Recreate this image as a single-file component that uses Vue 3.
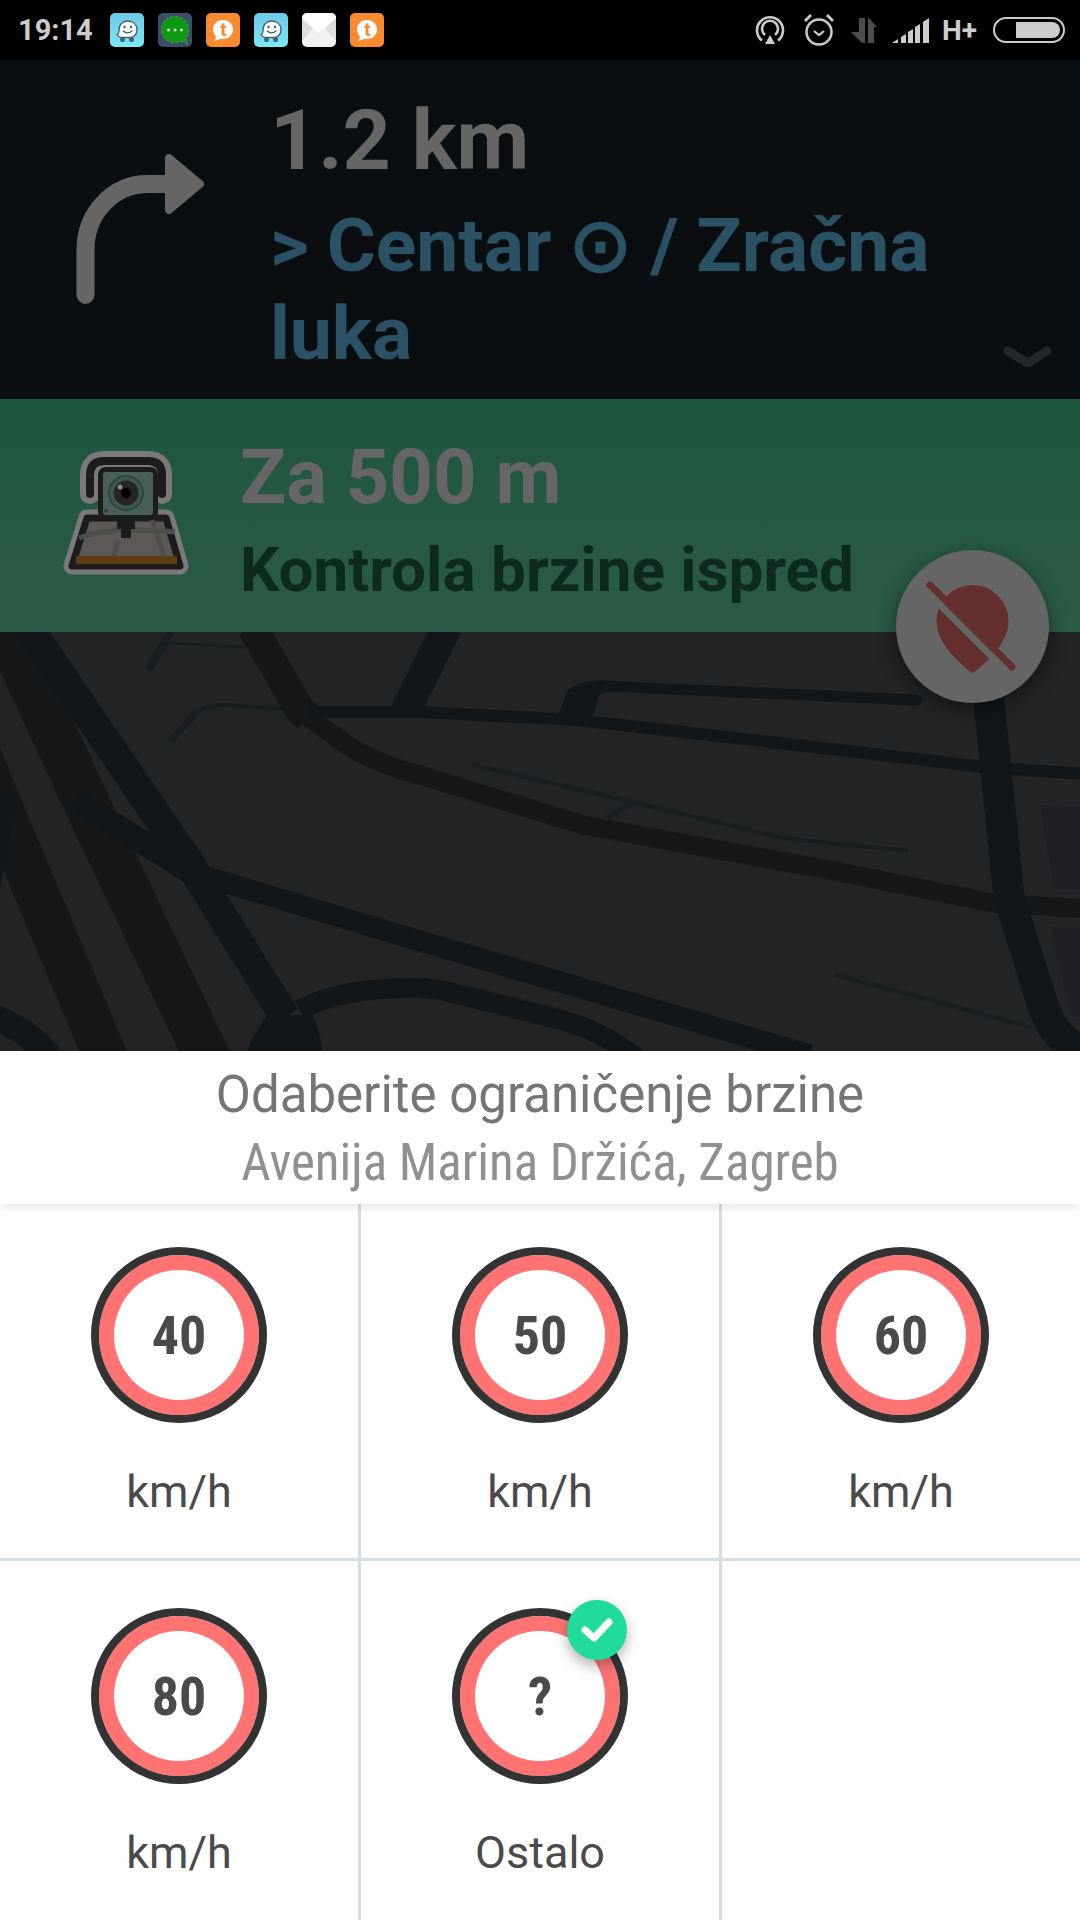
<script setup>
const notifications = ['waze', 'chat', 'talk', 'waze', 'mail', 'talk']

const limits = [
  { value: '40', label: 'km/h' },
  { value: '50', label: 'km/h' },
  { value: '60', label: 'km/h' },
  { value: '80', label: 'km/h' },
  { value: '?', label: 'Ostalo', selected: true },
  { empty: true }
]
</script>

<template>
  <div class="page">
    <div class="status-bar">
      <span class="time">19:14</span>
      <div class="notif-list">
        <svg v-for="(n, i) in notifications" :key="i" class="notif" viewBox="0 0 34 34">
          <template v-if="n === 'waze'">
            <defs>
              <linearGradient :id="'wz' + i" x1="0" y1="0" x2="0" y2="1">
                <stop offset="0" stop-color="#6cc9e6" />
                <stop offset="1" stop-color="#7ae9f6" />
              </linearGradient>
            </defs>
            <rect width="34" height="34" rx="5" :fill="'url(#wz' + i + ')'" />
            <path d="M9 17c0-6 4-9 9-9s9 3.500 9 8.500c0 4-2.500 7-6 8h-8c-2 0-5-1-6-3 1.500-.500 2-2 2-4.500z" fill="#fff" stroke="#45606e" stroke-width="1.300" />
            <circle cx="14.500" cy="14" r="1.200" fill="#45606e" />
            <circle cx="21" cy="14" r="1.200" fill="#45606e" />
            <path d="M13.500 18c2 2.500 6 2.500 8.500 0" fill="none" stroke="#45606e" stroke-width="1.300" stroke-linecap="round" />
            <circle cx="12.500" cy="26.500" r="2.500" fill="#45606e" />
            <circle cx="21.500" cy="26.500" r="2.500" fill="#45606e" />
          </template>
          <template v-else-if="n === 'chat'">
            <rect width="34" height="34" rx="5" fill="#3b4e66" />
            <path d="M17 3.500c7.500 0 13.500 5.800 13.500 13.300 0 3.200-1 6-2.800 8.200l1.800 5.500-6.200-2.400c-1.900.900-4 1.400-6.300 1.400C9.500 29.500 3.500 24.300 3.500 16.800S9.500 3.500 17 3.500z" fill="#0d9a12" stroke="#4cb05a" stroke-width=".800" stroke-dasharray="3 2" />
            <circle cx="10.500" cy="17" r="1.500" fill="#d8f0d8" />
            <circle cx="17" cy="17" r="1.500" fill="#d8f0d8" />
            <circle cx="23.500" cy="17" r="1.500" fill="#d8f0d8" />
          </template>
          <template v-else-if="n === 'talk'">
            <rect width="34" height="34" rx="5" fill="#f98a2f" />
            <path d="M17 7c5.500 0 10 4 10 9.500s-4.500 9.500-10 9.500c-.800 0-1.600-.100-2.300-.200L8.500 28l1.500-4.600C8 21.100 7 18.900 7 16.500 7 11 11.500 7 17 7z" fill="#fff" />
            <text x="17.500" y="23" text-anchor="middle" class="talk-t">t</text>
          </template>
          <template v-else>
            <rect width="34" height="34" rx="5" fill="#f1f1f1" />
            <path d="M0 5a5 5 0 0 1 5-5h24a5 5 0 0 1 5 5L17 20z" fill="#fff" />
            <path d="M0 5l11 10.500L0 28zM34 5L23 15.500 34 28z" fill="#dedede" />
          </template>
        </svg>
      </div>

      <div class="sys-icons">
        <svg class="sys" width="30" height="30" viewBox="0 0 30 30">
          <path d="M7 26.500a13 13 0 1 1 16 0M10 21a8 8 0 1 1 10 0" fill="none" stroke="#ccc" stroke-width="2.600" transform="translate(0 -1)" />
          <path d="M15 20l5 9H10z" fill="#ccc" />
        </svg>
        <svg class="sys" width="32" height="34" viewBox="0 0 32 34">
          <circle cx="16" cy="19" r="12.500" fill="none" stroke="#ccc" stroke-width="2.500" />
          <path d="M11 18l5 4 5-4" fill="none" stroke="#ccc" stroke-width="2.200" />
          <path d="M2 8l6-6M30 8l-6-6" stroke="#ccc" stroke-width="2.800" />
        </svg>
        <svg class="sys" width="27" height="26" viewBox="0 0 27 26">
          <path d="M15 1V26H12L1 15H9V1zM18 0V26H24V10H27z" fill="#4c4c4c" />
        </svg>
        <svg class="sys" width="37" height="25" viewBox="0 0 37 25">
          <path d="M0 25l6-4v4zM9 19l5-3v9H9zM16 14l5-3v14h-5zM23 9l5-3v19h-5zM31 4l6-4v25h-6z" fill="#ccc" />
        </svg>
        <span class="net">H+</span>
        <div class="battery"><div class="battery-level"></div></div>
      </div>
    </div>

    <div class="nav">
      <svg class="nav-arrow" width="270" height="339" viewBox="0 60 270 339">
        <path d="M85.500 295V250C85.500 213 113 184 148 184H172" fill="none" stroke="#666" stroke-width="18" stroke-linecap="round" />
        <path d="M169 158L200 184 169 210z" fill="#666" stroke="#666" stroke-width="8" stroke-linejoin="round" />
      </svg>
      <div class="nav-text">
        <div class="nav-dist">1.2 km</div>
        <div class="nav-street">&gt; Centar ⊙ / Zračna luka</div>
      </div>
      <svg class="nav-chevron" width="56" height="32" viewBox="0 0 56 32">
        <path d="M8 11L27.500 23 47 11" fill="none" stroke="#23272b" stroke-width="9" stroke-linecap="round" stroke-linejoin="round" />
      </svg>
    </div>

    <div class="alert">
      <svg class="alert-cam" width="200" height="180" viewBox="0 0 200 180">
        <g fill="none" stroke="#7a7a7a" stroke-linejoin="round" stroke-linecap="round">
          <path d="M60 74V55q0-14 14-14h44q14 0 14 14v19" stroke-width="20" />
          <path d="M57 98h79l14 48H42z" fill="#7a7a7a" stroke-width="17" />
        </g>
        <path d="M57 98h79l14 48H42z" fill="#5c5856" stroke="#1c1c1c" stroke-width="7" stroke-linejoin="round" />
        <path d="M49 118c20-8 45-10 96-6M88 120l-4 16M122 100l12 36" fill="none" stroke="#4d4d4b" stroke-width="5" />
        <rect x="46" y="136" width="101" height="8" fill="#5e3d14" />
        <path d="M60 74V55q0-14 14-14h44q14 0 14 14v19" fill="none" stroke="#1c1c1c" stroke-width="8" stroke-linecap="round" />
        <rect x="70.500" y="49.500" width="55" height="48" rx="5" fill="#4a5e5a" stroke="#1c1c1c" stroke-width="5" />
        <path d="M87 100h18v9h-4v9h-10v-9h-4z" fill="#1c1c1c" />
        <circle cx="96" cy="73" r="17" fill="#42574f" stroke="#264a3f" stroke-width="2" />
        <circle cx="96" cy="73" r="12.500" fill="#252525" />
        <circle cx="96" cy="73" r="5" fill="#000" />
        <circle cx="90" cy="67" r="2.500" fill="#8a8a8a" />
        <circle cx="76" cy="91" r="2" fill="#264a3f" />
      </svg>
      <div class="alert-text">
        <div class="alert-dist">Za 500 m</div>
        <div class="alert-title">Kontrola brzine ispred</div>
      </div>
    </div>

    <div class="map">
      <svg class="map-svg" width="1080" height="419" viewBox="0 0 1080 419">
        <g fill="none" stroke-linejoin="round">
          <!-- buildings -->
          <path d="M1040 173L1080 175V258L1054 256zM1050 295L1080 297V385L1072 385z" fill="#1e2023" />

          <!-- small streets -->
          <g stroke="#191e20">
            <path d="M172 -2L148 38" stroke-width="8" />
            <path d="M167 11L245 15" stroke-width="3" />
            <path d="M170 109L197 80" stroke-width="7" />
            <path d="M197 80Q210 72 227 73L282 77" stroke-width="4" />
            <path d="M473 133L633 170 770 203Q803 210 906 218" stroke-width="4" stroke-linecap="round" />
            <path d="M607 186L633 170" stroke-width="5" />
            <path d="M837 343L1030 395" stroke-width="4" stroke-linecap="round" />
          </g>

          <!-- wide bands under the rest -->
          <g stroke="#151719">
            <path d="M-40 78L25 233 108 431" stroke-width="44" />
            <path d="M5 -5L92 183 210 431" stroke-width="46" />
            <path d="M252 -5L300 78 308 85" stroke-width="30" />
            <path d="M304 82L350 115Q380 133 420 143L583 193 840 240 992 271 1090 277" stroke-width="19" />
          </g>

          <!-- main roads -->
          <g stroke="#11161a">
            <path d="M310 80H420L577 88 840 118 992 136 1090 142" stroke-width="12" />
            <path d="M405 80L447 -5" stroke-width="30" />
            <path d="M603 54L916 68" stroke-width="11" stroke-linecap="round" />
            <path d="M988 60L1009 265 1045 380Q1060 415 1095 425" stroke-width="31" />
            <path d="M28 -5L190 232 285 385" stroke-width="30" />
            <path d="M84 174L207 250" stroke-width="24" stroke-linecap="round" />
            <path d="M207 245L420 309 810 423" stroke-width="21" />
            <path d="M300 378Q340 355 420 356 440 357 453 361L562 388Q600 398 640 428" stroke-width="20" />
            <path d="M-10 384Q25 395 50 425" stroke-width="26" />
          </g>
          <path d="M559 81L567 60Q572 50 603 48L613 60Q600 60 598 65L593 84z" fill="#11161a" />
          <path d="M267 383Q255 400 247 419H322Q321 400 312 383z" fill="#11161a" />
          <path d="M0 160L17 162 0 256z" fill="#11161a" />
        </g>
      </svg>
      <button class="fab">
        <svg width="153" height="153" viewBox="0 0 153 153">
          <path d="M76.500 123.500C62 112 40.500 93 40.500 71A36 36 0 0 1 112.500 71C112.500 93 91 112 76.500 123.500z" fill="#662f2f" />
          <path d="M26 36L120 130" stroke="#666" stroke-width="8" />
          <path d="M34 35L116 117" stroke="#662f2f" stroke-width="7" stroke-linecap="round" />
        </svg>
      </button>
    </div>

    <div class="sheet-head">
      <div class="sheet-title">Odaberite ograničenje brzine</div>
      <div class="sheet-sub">Avenija Marina Držića, Zagreb</div>
    </div>

    <div class="limit-grid">
      <div v-for="(l, i) in limits" :key="i" class="limit-cell">
        <template v-if="!l.empty">
          <div class="sign">
            <span class="sign-value">{{ l.value }}</span>
            <div v-if="l.selected" class="badge">
              <svg width="60" height="60" viewBox="0 0 60 60">
                <path d="M18 30l9 8 15-16" fill="none" stroke="#fff" stroke-width="7" stroke-linecap="round" stroke-linejoin="round" />
              </svg>
            </div>
          </div>
          <div class="limit-label">{{ l.label }}</div>
        </template>
      </div>
    </div>
  </div>
</template>

<style scoped>
.page {
  width: 1080px;
  height: 1920px;
  overflow: hidden;
  display: flex;
  flex-direction: column;
  background: #fff;
  font-family: Roboto, sans-serif;
}

.status-bar {
  height: 60px;
  flex-shrink: 0;
  background: #000;
  display: flex;
  align-items: center;
  padding-left: 18px;
  box-sizing: border-box;
}

.time {
  width: 92px;
  font-size: 29px;
  font-weight: 700;
  color: #ccc;
}

.notif-list {
  display: flex;
  gap: 14px;
}

.notif {
  width: 34px;
  height: 34px;
  display: block;
}

.talk-t {
  font-family: Roboto, sans-serif;
  font-size: 19px;
  font-weight: 700;
  fill: #f98a2f;
}

.sys-icons {
  margin-left: auto;
  display: flex;
  align-items: center;
  padding-right: 15px;
}

.sys {
  display: block;
  flex-shrink: 0;
}

.sys:nth-child(1) { margin-right: 18px; }
.sys:nth-child(2) { margin-right: 15px; }
.sys:nth-child(3) { margin-right: 15px; }
.sys:nth-child(4) { margin-right: 13px; }

.net {
  font-size: 28px;
  font-weight: 700;
  color: #ccc;
  margin-right: 16px;
}

.battery {
  width: 72px;
  height: 26px;
  box-sizing: border-box;
  border: 2px solid #ccc;
  border-radius: 13px;
  padding: 3px 3px 3px 21px;
}

.battery-level {
  height: 100%;
  background: #ccc;
  border-radius: 0 8px 8px 0;
}

.nav {
  height: 339px;
  flex-shrink: 0;
  background: #0a0e11;
  display: flex;
  position: relative;
}

.nav-arrow {
  display: block;
  flex-shrink: 0;
}

.nav-text {
  width: 700px;
  padding-top: 20px;
}

.nav-dist {
  font-size: 84px;
  line-height: 121px;
  font-weight: 700;
  color: #666;
}

.nav-street {
  font-size: 75px;
  line-height: 88px;
  font-weight: 700;
  color: #2b5165;
  word-spacing: -0.6px;
}

.nav-chevron {
  position: absolute;
  left: 1000px;
  top: 280px;
}

.alert {
  height: 233px;
  flex-shrink: 0;
  display: flex;
  background: linear-gradient(#1e5640, #2c5b47);
}

.alert-cam {
  display: block;
  flex-shrink: 0;
  margin: 21px 0 0 30px;
}

.alert-text {
  margin-left: 10px;
  padding-top: 29px;
}

.alert-dist {
  font-size: 76px;
  line-height: 99px;
  font-weight: 700;
  color: #666;
}

.alert-title {
  font-size: 62px;
  line-height: 86px;
  font-weight: 700;
  color: #0e2a1f;
}

.map {
  height: 419px;
  flex-shrink: 0;
  background: #222426;
  position: relative;
}

.map-svg {
  display: block;
}

.fab {
  position: absolute;
  left: 896px;
  top: -82px;
  width: 153px;
  height: 153px;
  padding: 0;
  border: none;
  border-radius: 50%;
  background: #666;
  box-shadow: 0 6px 20px rgba(0, 0, 0, 0.45);
}

.fab svg {
  display: block;
}

.sheet-head {
  height: 153px;
  flex-shrink: 0;
  box-sizing: border-box;
  padding-top: 12px;
  background: #fff;
  text-align: center;
  position: relative;
  box-shadow: 0 3px 10px rgba(0, 0, 0, 0.1);
}

.sheet-title {
  font-size: 51px;
  line-height: 64px;
  color: #757575;
}

.sheet-sub {
  font-size: 51px;
  line-height: 72px;
  font-stretch: condensed;
  color: #909090;
}

.limit-grid {
  display: grid;
  grid-template-columns: 361px 361px 358px;
  grid-template-rows: 357px 361px;
}

.limit-cell {
  box-sizing: border-box;
  display: flex;
  flex-direction: column;
  align-items: center;
  padding-top: 47px;
  border-right: 3px solid #d3e0e3;
  border-bottom: 3px solid #d3e0e3;
}

.limit-cell:nth-child(-n+3) {
  padding-top: 43px;
}

.limit-cell:nth-child(3n) {
  border-right: none;
}

.limit-cell:nth-child(n+4) {
  border-bottom: none;
}

.sign {
  width: 176px;
  height: 176px;
  box-sizing: border-box;
  border-radius: 50%;
  border: 8px solid #333;
  background: #fff;
  box-shadow: inset 0 0 0 15px #ff7373;
  display: flex;
  align-items: center;
  justify-content: center;
  position: relative;
}

.sign-value {
  font-size: 54px;
  font-weight: 700;
  font-stretch: condensed;
  color: #4a4a4a;
}

.badge {
  position: absolute;
  top: -16px;
  right: -7px;
  width: 60px;
  height: 60px;
  border-radius: 50%;
  background: #20db9a;
  box-shadow: 0 6px 14px rgba(0, 0, 0, 0.3);
}

.badge svg {
  display: block;
}

.limit-label {
  margin-top: 44px;
  font-size: 45px;
  line-height: 50px;
  color: #4a4a4a;
}
</style>
